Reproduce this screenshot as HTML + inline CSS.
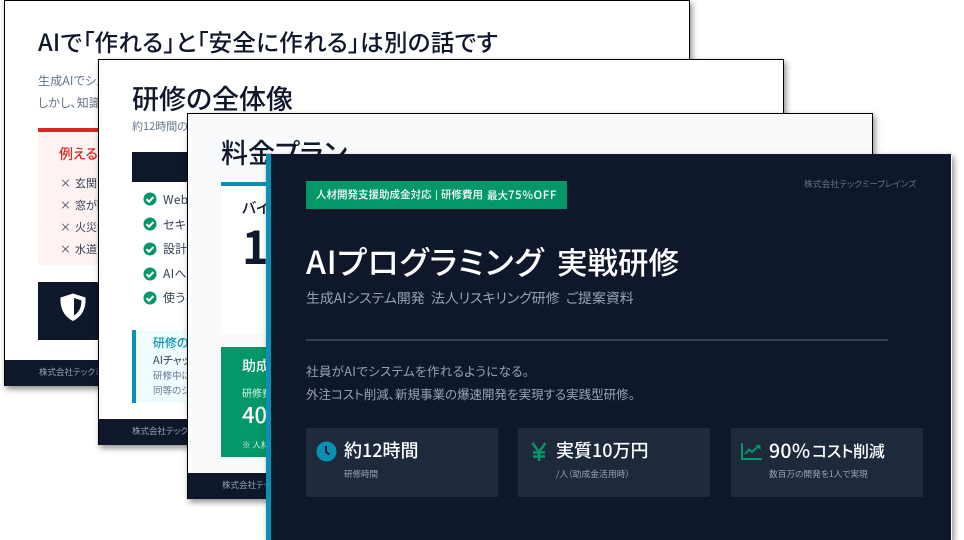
<!DOCTYPE html>
<html lang="ja"><head><meta charset="utf-8">
<style>
html,body{margin:0;padding:0;background:#fff}
body{width:964px;height:540px;position:relative;overflow:hidden;font-family:"Noto Sans CJK JP","Liberation Sans",sans-serif;font-feature-settings:"palt"}
.s{position:absolute;width:686px;height:386px;box-sizing:border-box;border:1px solid #000;border-bottom:0;overflow:hidden;background:#fff;}
.sh{position:absolute;width:686px;height:386px;box-shadow:2px 3px 6px rgba(0,0,0,.45)}
.t{position:absolute;white-space:nowrap;line-height:1}
.b{position:absolute}
.f{position:absolute;left:0;right:0;bottom:0;height:26px;background:#0f172a}
</style></head><body>

<div class="sh" style="left:4px;top:0"></div>
<div class="s" style="left:4px;top:0">
 <div class="t" style="left:33px;top:29px;font-size:23.500px;letter-spacing:.3px;font-weight:500;color:#0f172a">AIで「作れる」と「安全に作れる」は別の話です</div>
 <div class="t" style="left:33px;top:74px;font-size:12px;letter-spacing:.2px;color:#64748b">生成AIでシステムを作ること自体は簡単になりました。</div>
 <div class="t" style="left:33px;top:96px;font-size:12px;letter-spacing:.2px;color:#64748b">しかし、知識がないまま作ると大きなリスクがあります。</div>
 <div class="b" style="left:33px;top:127px;width:620px;height:137px;background:#fef2f2;border-top:4px solid #dc2626;box-sizing:border-box"></div>
 <div class="t" style="left:54px;top:146px;font-size:14px;font-weight:500;color:#dc2626">例えるなら</div>
 <div class="t" style="left:55px;top:177px;font-size:11px;color:#334155">×</div><div class="t" style="left:70px;top:177px;font-size:11px;color:#334155">玄関に鍵がない家</div>
 <div class="t" style="left:55px;top:199px;font-size:11px;color:#334155">×</div><div class="t" style="left:70px;top:199px;font-size:11px;color:#334155">窓が開いたままの家</div>
 <div class="t" style="left:55px;top:221px;font-size:11px;color:#334155">×</div><div class="t" style="left:70px;top:221px;font-size:11px;color:#334155">火災報知器がない家</div>
 <div class="t" style="left:55px;top:243px;font-size:11px;color:#334155">×</div><div class="t" style="left:70px;top:243px;font-size:11px;color:#334155">水道が漏れている家</div>
 <div class="b" style="left:33px;top:281px;width:620px;height:58px;background:#0f172a"></div>
 <svg class="b" style="left:54px;top:291px" width="28" height="30" viewBox="0 0 28 30"><path d="M14 1.500 26.500 5.500C27 15 24 24 14 29 4 24 1 15 1.500 5.500Z" fill="#fff"/><path d="M15 6 22.500 8.500C22.500 15 20 20.500 15 23.500Z" fill="#0f172a"/></svg>
 <div class="f"><div class="t" style="left:34px;top:8px;font-size:8.500px;color:#94a3b8">株式会社テックミーブレインズ</div></div>
</div>

<div class="sh" style="left:98px;top:59px"></div>
<div class="s" style="left:98px;top:59px">
 <div class="t" style="left:33px;top:24px;font-size:27px;font-weight:500;color:#0f172a">研修の全体像</div>
 <div class="t" style="left:33px;top:61px;font-size:11px;color:#64748b">約12時間のカリキュラム</div>
 <div class="b" style="left:33px;top:92px;width:620px;height:30px;background:#0f172a"></div>
 <svg class="b" style="left:44px;top:132px" width="14" height="132" viewBox="0 0 14 132">
  <g fill="#059669"><circle cx="7" cy="7" r="6.500"/><circle cx="7" cy="32" r="6.500"/><circle cx="7" cy="57" r="6.500"/><circle cx="7" cy="82" r="6.500"/><circle cx="7" cy="106" r="6.500"/></g>
  <g fill="none" stroke="#fff" stroke-width="2"><path d="M3.500 7.200 6 9.700 10.500 5"/><path d="M3.500 32.200 6 34.700 10.500 30"/><path d="M3.500 57.200 6 59.700 10.500 55"/><path d="M3.500 82.200 6 84.700 10.500 80"/><path d="M3.500 106.200 6 108.700 10.500 104"/></g>
 </svg>
 <div class="t" style="left:64px;top:134px;font-size:12px;letter-spacing:.3px;color:#334155">Webアプリ開発</div>
 <div class="t" style="left:64px;top:159px;font-size:12px;letter-spacing:.3px;color:#334155">セキュリティ対策</div>
 <div class="t" style="left:64px;top:183px;font-size:12px;letter-spacing:.3px;color:#334155">設計の基本</div>
 <div class="t" style="left:64px;top:208px;font-size:12px;letter-spacing:.3px;color:#334155">AIへの指示方法</div>
 <div class="t" style="left:64px;top:232px;font-size:12px;letter-spacing:.3px;color:#334155">使うべきツール</div>
 <div class="b" style="left:33px;top:270px;width:620px;height:73px;background:#f0fdff;border-left:4px solid #0891b2;box-sizing:border-box"></div>
 <div class="t" style="left:54px;top:277px;font-size:12px;font-weight:500;color:#0891b2">研修のゴール</div>
 <div class="t" style="left:54px;top:295px;font-size:11px;color:#334155">AIチャットシステムの構築</div>
 <div class="t" style="left:54px;top:311px;font-size:9.500px;color:#64748b">研修中に実際に開発します</div>
 <div class="t" style="left:54px;top:326px;font-size:9.500px;color:#64748b">同等のシステムを作れます</div>
 <div class="f"><div class="t" style="left:33px;top:8px;font-size:8.500px;color:#94a3b8">株式会社テックミーブレインズ</div></div>
</div>

<div class="sh" style="left:187px;top:113px"></div>
<div class="s" style="left:187px;top:113px;background:#f8fafc">
 <div class="t" style="left:33px;top:24px;font-size:27px;font-weight:500;color:#0f172a">料金プラン</div>
 <div class="b" style="left:33px;top:68px;width:300px;height:152px;background:#fff;border-top:4px solid #0891b2;box-sizing:border-box"></div>
 <div class="t" style="left:54px;top:86px;font-size:15px;font-weight:500;color:#0f172a">バイブコーディング</div>
 <div class="t" style="left:54px;top:108px;font-size:45px;font-weight:700;color:#0f172a">1</div>
 <div class="b" style="left:33px;top:233px;width:300px;height:110px;background:#059669"></div>
 <div class="t" style="left:54px;top:245px;font-size:14px;font-weight:500;color:#fff">助成金活用</div>
 <div class="t" style="left:54px;top:274px;font-size:10px;color:#d1fae5">研修費用</div>
 <div class="t" style="left:54px;top:289px;font-size:22px;font-weight:500;color:#fff">40万円</div>
 <div class="t" style="left:54px;top:327px;font-size:8.500px;color:#d1fae5">※ 人材開発支援助成金</div>
 <div class="f"><div class="t" style="left:34px;top:8px;font-size:8.500px;color:#94a3b8">株式会社テックミーブレインズ</div></div>
</div>

<div class="sh" style="left:266px;top:154px"></div>
<div class="b" style="left:266px;top:154px;width:685px;height:386px;background:#0f172a;overflow:hidden">
 <div class="b" style="left:0;top:0;width:5px;height:386px;background:#0891b2"></div>
 <div class="b" style="left:40px;top:27px;width:261px;height:28px;background:#059669"></div>
 <div class="t" style="left:50px;top:36px;font-size:10.500px;font-weight:500;color:#fff">人材開発支援助成金対応</div>
 <div class="b" style="left:170px;top:36px;width:1px;height:10px;background:#a7f3d0"></div>
 <div class="t" style="left:175px;top:36px;font-size:10.500px;font-weight:500;color:#fff">研修費用</div>
 <div class="t" style="left:221px;top:36px;font-size:10.500px;font-weight:500;color:#fff">最大<span style="font-size:11.500px;letter-spacing:.55px">75%OFF</span></div>
 <div class="t" style="left:538px;top:26px;font-size:8.800px;color:#64748b">株式会社テックミーブレインズ</div>
 <div class="t" style="left:40px;top:91px;font-size:32px;letter-spacing:.8px;font-weight:500;color:#fff">AIプログラミング</div>
 <div class="t" style="left:291px;top:92px;font-size:30.500px;font-weight:500;color:#fff">実戦研修</div>
 <div class="t" style="left:40px;top:138px;font-size:13.900px;color:#94a3b8">生成AIシステム開発 &nbsp;法人リスキリング研修 &nbsp;ご提案資料</div>
 <div class="b" style="left:40px;top:185px;width:582px;height:2px;background:#334155"></div>
 <div class="t" style="left:40px;top:211px;font-size:12.500px;letter-spacing:.35px;color:#94a3b8">社員がAIでシステムを作れるようになる。</div>
 <div class="t" style="left:40px;top:234px;font-size:12.500px;color:#94a3b8">外注コスト削減、新規事業の爆速開発を実現する実践型研修。</div>

 <div class="b" style="left:40px;top:274px;width:192px;height:69px;background:#1e293b"></div>
 <div class="b" style="left:252px;top:274px;width:192px;height:69px;background:#1e293b"></div>
 <div class="b" style="left:465px;top:274px;width:192px;height:69px;background:#1e293b"></div>

 <svg class="b" style="left:50px;top:287px" width="21" height="21" viewBox="0 0 21 21"><circle cx="10.500" cy="10.500" r="10" fill="#0891b2"/><path d="M10 5v6l3.500 2.500" fill="none" stroke="#0f172a" stroke-width="2"/></svg>
 <div class="t" style="left:78px;top:287px;font-size:18px;font-weight:500;color:#fff">約12時間</div>
 <div class="t" style="left:78px;top:316px;font-size:8.500px;color:#94a3b8">研修時間</div>

 <svg class="b" style="left:265px;top:288px" width="16" height="20" viewBox="0 0 16 20"><path d="M1.500 1 8 10 14.500 1M8 10v9M2 10.500h12M2 14.500h12" fill="none" stroke="#059669" stroke-width="2.400"/></svg>
 <div class="t" style="left:290px;top:287px;font-size:18px;font-weight:500;color:#fff">実質10万円</div>
 <div class="t" style="left:290px;top:316px;font-size:8.800px;color:#94a3b8">/人（助成金活用時）</div>

 <svg class="b" style="left:475px;top:289px" width="21" height="17" viewBox="0 0 21 17"><path d="M1 0v16h20" fill="none" stroke="#059669" stroke-width="2"/><path d="M4 11 8 6.500 11 9 17 3.500" fill="none" stroke="#059669" stroke-width="2"/><path d="M14.500 2H19.500V7Z" fill="#059669"/></svg>
 <div class="t" style="left:503px;top:286px;font-size:19.500px;letter-spacing:.3px;font-weight:500;color:#fff">90%</div>
 <div class="t" style="left:546px;top:288px;font-size:16px;letter-spacing:-.3px;font-weight:500;color:#fff">コスト削減</div>
 <div class="t" style="left:503px;top:316px;font-size:8.700px;color:#94a3b8">数百万の開発を1人で実現</div>
</div>
</body></html>
